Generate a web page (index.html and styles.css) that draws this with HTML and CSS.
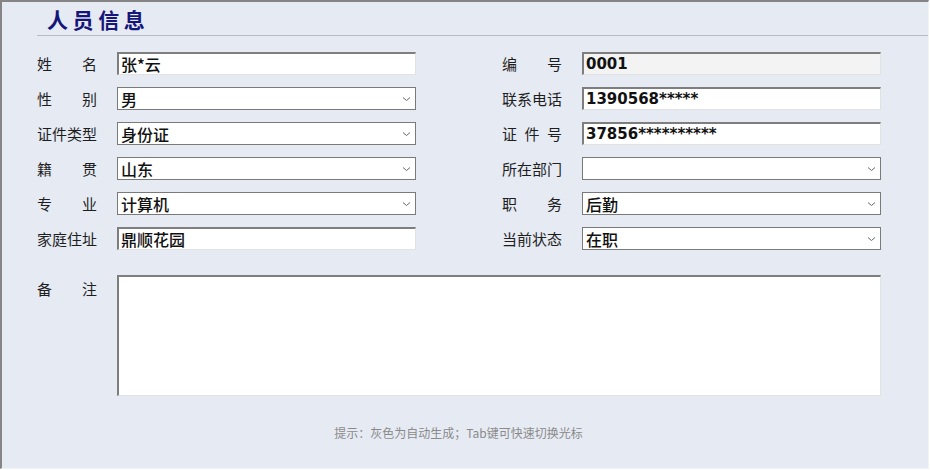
FILE: index.html
```html
<!DOCTYPE html>
<html lang="zh">
<head>
<meta charset="utf-8">
<title>人员信息</title>
<link rel="stylesheet" href="styles.css">
</head>
<body>
<div class="window">
  <div class="header"><h1 class="title">人员信息</h1></div>
  <div class="grid">
    <div class="pair"><div class="label"><span>姓</span><span>名</span></div><div class="field input">张*云</div></div>
    <div class="pair"><div class="label"><span>编</span><span>号</span></div><div class="field input readonly"><span class="latin">0001</span></div></div>

    <div class="pair"><div class="label"><span>性</span><span>别</span></div><div class="field select"><span class="val">男</span><svg class="chev" width="9" height="6" viewBox="0 0 9 6"><path d="M1 1.5 L4.5 4.5 L8 1.5" fill="none" stroke="#666" stroke-width="1"/></svg></div></div>
    <div class="pair"><div class="label"><span>联</span><span>系</span><span>电</span><span>话</span></div><div class="field input"><span class="latin">1390568*****</span></div></div>

    <div class="pair"><div class="label"><span>证</span><span>件</span><span>类</span><span>型</span></div><div class="field select"><span class="val">身份证</span><svg class="chev" width="9" height="6" viewBox="0 0 9 6"><path d="M1 1.5 L4.5 4.5 L8 1.5" fill="none" stroke="#666" stroke-width="1"/></svg></div></div>
    <div class="pair"><div class="label"><span>证</span><span>件</span><span>号</span></div><div class="field input"><span class="latin">37856**********</span></div></div>

    <div class="pair"><div class="label"><span>籍</span><span>贯</span></div><div class="field select"><span class="val">山东</span><svg class="chev" width="9" height="6" viewBox="0 0 9 6"><path d="M1 1.5 L4.5 4.5 L8 1.5" fill="none" stroke="#666" stroke-width="1"/></svg></div></div>
    <div class="pair"><div class="label"><span>所</span><span>在</span><span>部</span><span>门</span></div><div class="field select"><span class="val"></span><svg class="chev" width="9" height="6" viewBox="0 0 9 6"><path d="M1 1.5 L4.5 4.5 L8 1.5" fill="none" stroke="#666" stroke-width="1"/></svg></div></div>

    <div class="pair"><div class="label"><span>专</span><span>业</span></div><div class="field select"><span class="val">计算机</span><svg class="chev" width="9" height="6" viewBox="0 0 9 6"><path d="M1 1.5 L4.5 4.5 L8 1.5" fill="none" stroke="#666" stroke-width="1"/></svg></div></div>
    <div class="pair"><div class="label"><span>职</span><span>务</span></div><div class="field select"><span class="val">后勤</span><svg class="chev" width="9" height="6" viewBox="0 0 9 6"><path d="M1 1.5 L4.5 4.5 L8 1.5" fill="none" stroke="#666" stroke-width="1"/></svg></div></div>

    <div class="pair"><div class="label"><span>家</span><span>庭</span><span>住</span><span>址</span></div><div class="field input">鼎顺花园</div></div>
    <div class="pair"><div class="label"><span>当</span><span>前</span><span>状</span><span>态</span></div><div class="field select"><span class="val">在职</span><svg class="chev" width="9" height="6" viewBox="0 0 9 6"><path d="M1 1.5 L4.5 4.5 L8 1.5" fill="none" stroke="#666" stroke-width="1"/></svg></div></div>
  </div>
  <div class="memo-row">
    <div class="label memo-label"><span>备</span><span>注</span></div>
    <div class="memo"></div>
  </div>
  <div class="hint">提示：灰色为自动生成；Tab键可快速切换光标</div>
</div>
</body>
</html>
```

FILE: styles.css
```css
* { box-sizing: border-box; }
html, body { margin: 0; padding: 0; background: #ffffff; }
body {
  font-family: "Noto Sans CJK SC", "Noto Sans", sans-serif;
  width: 930px;
  height: 470px;
  overflow: hidden;
}
.window {
  width: 929px;
  height: 469px;
  background: #e6eaf3;
  border-top: 2px solid #858585;
  border-left: 2px solid #858585;
  border-right: 1px solid #f2f3f6;
  border-bottom: 1px solid #f2f3f6;
  padding-left: 35px;
}
.header {
  height: 34px;
  border-bottom: 1px solid #b7bbc3;
  padding-left: 10px;
}
.title {
  margin: 0;
  font-size: 21px;
  line-height: 34px;
  font-weight: 700;
  color: #16167a;
  letter-spacing: 4.6px;
}
.grid {
  margin-top: 16px;
  display: grid;
  grid-template-columns: 379px 379px;
  column-gap: 86px;
  row-gap: 12px;
}
.pair {
  display: flex;
  align-items: center;
  gap: 20px;
}
.label {
  width: 60px;
  flex: none;
  display: flex;
  justify-content: space-between;
  font-size: 15px;
  line-height: 20px;
  color: #1e1e1e;
}
.field {
  flex: none;
  width: 299px;
  height: 23px;
  background: #ffffff;
  font-size: 16px;
  line-height: 20px;
  font-weight: 500;
  color: #111;
  display: flex;
  align-items: center;
}
.input {
  border-top: 2px solid #7e7e7e;
  border-left: 2px solid #7e7e7e;
  border-right: 1px solid #e2e2e2;
  border-bottom: 1px solid #e2e2e2;
  padding-left: 2px;
}
.readonly { background: #f3f3f3; }
.select {
  border: 1px solid #7a7a7a;
  padding-left: 3px;
  padding-right: 4px;
  justify-content: space-between;
}
.latin {
  font-family: "DejaVu Sans", "Noto Sans", sans-serif;
  font-size: 15px;
  font-weight: 700;
}
.chev { flex: none; }
.memo-row {
  margin-top: 25px;
  display: flex;
  gap: 20px;
}
.memo-label { margin-top: 4px; }
.memo {
  width: 764px;
  height: 121px;
  background: #ffffff;
  border-top: 2px solid #7e7e7e;
  border-left: 2px solid #7e7e7e;
  border-right: 1px solid #e2e2e2;
  border-bottom: 1px solid #e2e2e2;
}
.hint {
  margin-top: 27px;
  margin-left: -35px;
  padding-right: 13px;
  text-align: center;
  font-size: 12px;
  line-height: 20px;
  color: #8a8a8a;
}
```
